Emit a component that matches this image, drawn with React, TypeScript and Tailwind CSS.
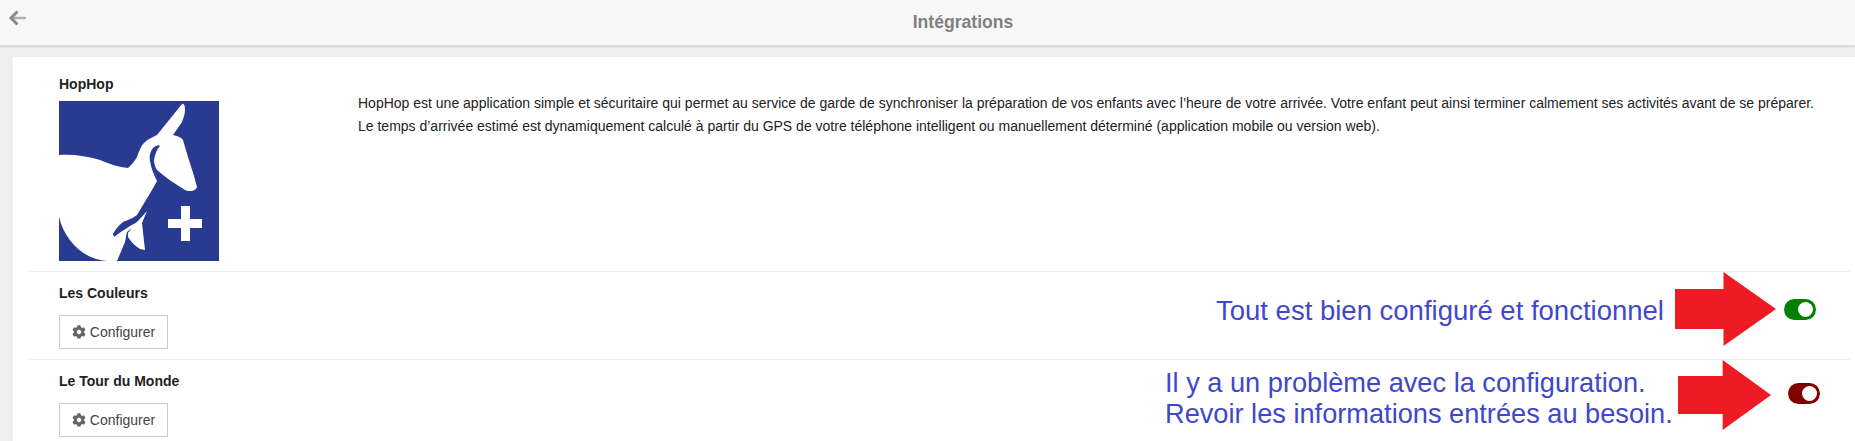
import { FaCog } from "react-icons/fa";

function Logo() {
  return (
    <svg width="160" height="160" viewBox="0 0 160 160" className="block">
      <rect width="160" height="160" fill="#283b90" />
      <path
        fill="#fff"
        d="M0 54C14 53 28 55 41 59C50 63 60 66 69 67C73 63 76 60 78 56C80 50 82 45 85 42C89 38 94 36 98 34L123 3C125 2 126 4 126 9C126 14 124 18 123 21L114 34C119 35 123 37 124 39C128 54 134 70 138 86C137 88 136 89 133 90C130 90 128 90 126 89C116 83 106 76 98 69C96 66 95 62 95 59C96 53 98 48 101 45C100 43 96 45 94 47C91 51 90 56 91 60C92 67 95 74 98 80L93 89L78 114C73 118 68 119 64 121C59 125 56 129 54 133L55 136C59 133 63 130 68 127C72 124 76 123 79 120L88 110L83 122L86 149L81 148C76 145 72 141 69 136L69 132L73 127L68 131L66 141L58 160H48C24 158 6 140 0 116Z"
      />
      <path fill="#fff" d="M122 105H131V118H143V127H131V140H122V127H109V118H122Z" />
    </svg>
  );
}

function Toggle({ color, className }: { color: string; className: string }) {
  return (
    <span className={`flex h-[21px] w-8 items-center justify-end rounded-full pr-[3px] ${color} ${className}`}>
      <span className="h-[15px] w-[15px] rounded-full bg-white" />
    </span>
  );
}

function Arrow({ className, w, h }: { className: string; w: number; h: number }) {
  return (
    <svg width={w} height={h} viewBox="0 0 100 100" preserveAspectRatio="none" className={className}>
      <path fill="#ed1c24" d="M0 23H48V0L100 50L48 100V77H0Z" />
    </svg>
  );
}

function ConfigButton() {
  return (
    <button className="flex h-[34px] w-[109px] items-center justify-center gap-[4px] border border-[#ccc] bg-white text-[14px] text-[#444]">
      <FaCog className="h-[14px] w-[14px] text-[#666]" />
      Configurer
    </button>
  );
}

export default function App() {
  return (
    <div className="h-[441px] w-full overflow-hidden bg-[#eeeeee] font-['Liberation_Sans',Arial,sans-serif]">
      <header className="relative flex h-[46px] items-center justify-center border-b border-[#ddd] bg-[#f8f8f8] pl-[71px] shadow-[0_1px_2px_rgba(0,0,0,0.1)]">
        <svg width="20" height="20" viewBox="0 0 20 20" fill="none" className="absolute left-[7px] top-[8px]">
          <path d="M19 10H5" stroke="#b0b0b0" strokeWidth="2.5" />
          <path d="M10.5 3.5L4 10L10.5 16.5" stroke="#8a8a8a" strokeWidth="3" />
        </svg>
        <h1 className="text-[17.6px] font-bold text-[#808080]">Intégrations</h1>
      </header>

      <main className="ml-[13px] mt-[11px] h-[400px] bg-white pl-4 pr-[5px]">
        <section className="flex h-[215px] border-b border-[#eee] pl-[30px] pt-[20px]">
          <div className="w-[299px] shrink-0">
            <h2 className="mb-[9px] text-[14px] leading-[15px] font-bold text-[#222]">HopHop</h2>
            <Logo />
          </div>
          <div className="pt-[15px] text-[14px] leading-[23px] text-[#222]">
            <p className="whitespace-nowrap">
              HopHop est une application simple et sécuritaire qui permet au service de garde de synchroniser la préparation de vos enfants avec l’heure de votre arrivée. Votre enfant peut ainsi terminer calmement ses activités avant de se préparer.
            </p>
            <p className="whitespace-nowrap">
              Le temps d’arrivée estimé est dynamiquement calculé à partir du GPS de votre téléphone intelligent ou manuellement déterminé (application mobile ou version web).
            </p>
          </div>
        </section>

        <section className="relative flex h-[88px] items-start justify-between border-b border-[#eee] pl-[30px] pt-[14px]">
          <div>
            <h2 className="mb-[14px] text-[14px] leading-[15px] font-bold text-[#222]">Les Couleurs</h2>
            <ConfigButton />
          </div>
          <Toggle color="bg-[#008000]" className="mr-[34px] mt-[13px]" />
          <p className="absolute left-[1187px] top-[24px] whitespace-nowrap text-[27.5px] leading-[30px] text-[#3f48cc]">
            Tout est bien configuré et fonctionnel
          </p>
          <Arrow className="absolute left-[1646px] top-0" w={101} h={74} />
        </section>

        <section className="relative flex h-[82px] items-start justify-between pl-[30px] pt-[14px]">
          <div>
            <h2 className="mb-[14px] text-[14px] leading-[15px] font-bold text-[#222]">Le Tour du Monde</h2>
            <ConfigButton />
          </div>
          <Toggle color="bg-[#800000]" className="mr-[30px] mt-[9px]" />
          <p className="absolute left-[1136px] top-[7px] whitespace-nowrap text-[27.2px] leading-[31px] text-[#3f48cc]">
            Il y a un problème avec la configuration.
            <br />
            Revoir les informations entrées au besoin.
          </p>
          <Arrow className="absolute left-[1649px] top-0" w={93} h={70} />
        </section>
      </main>
    </div>
  );
}
